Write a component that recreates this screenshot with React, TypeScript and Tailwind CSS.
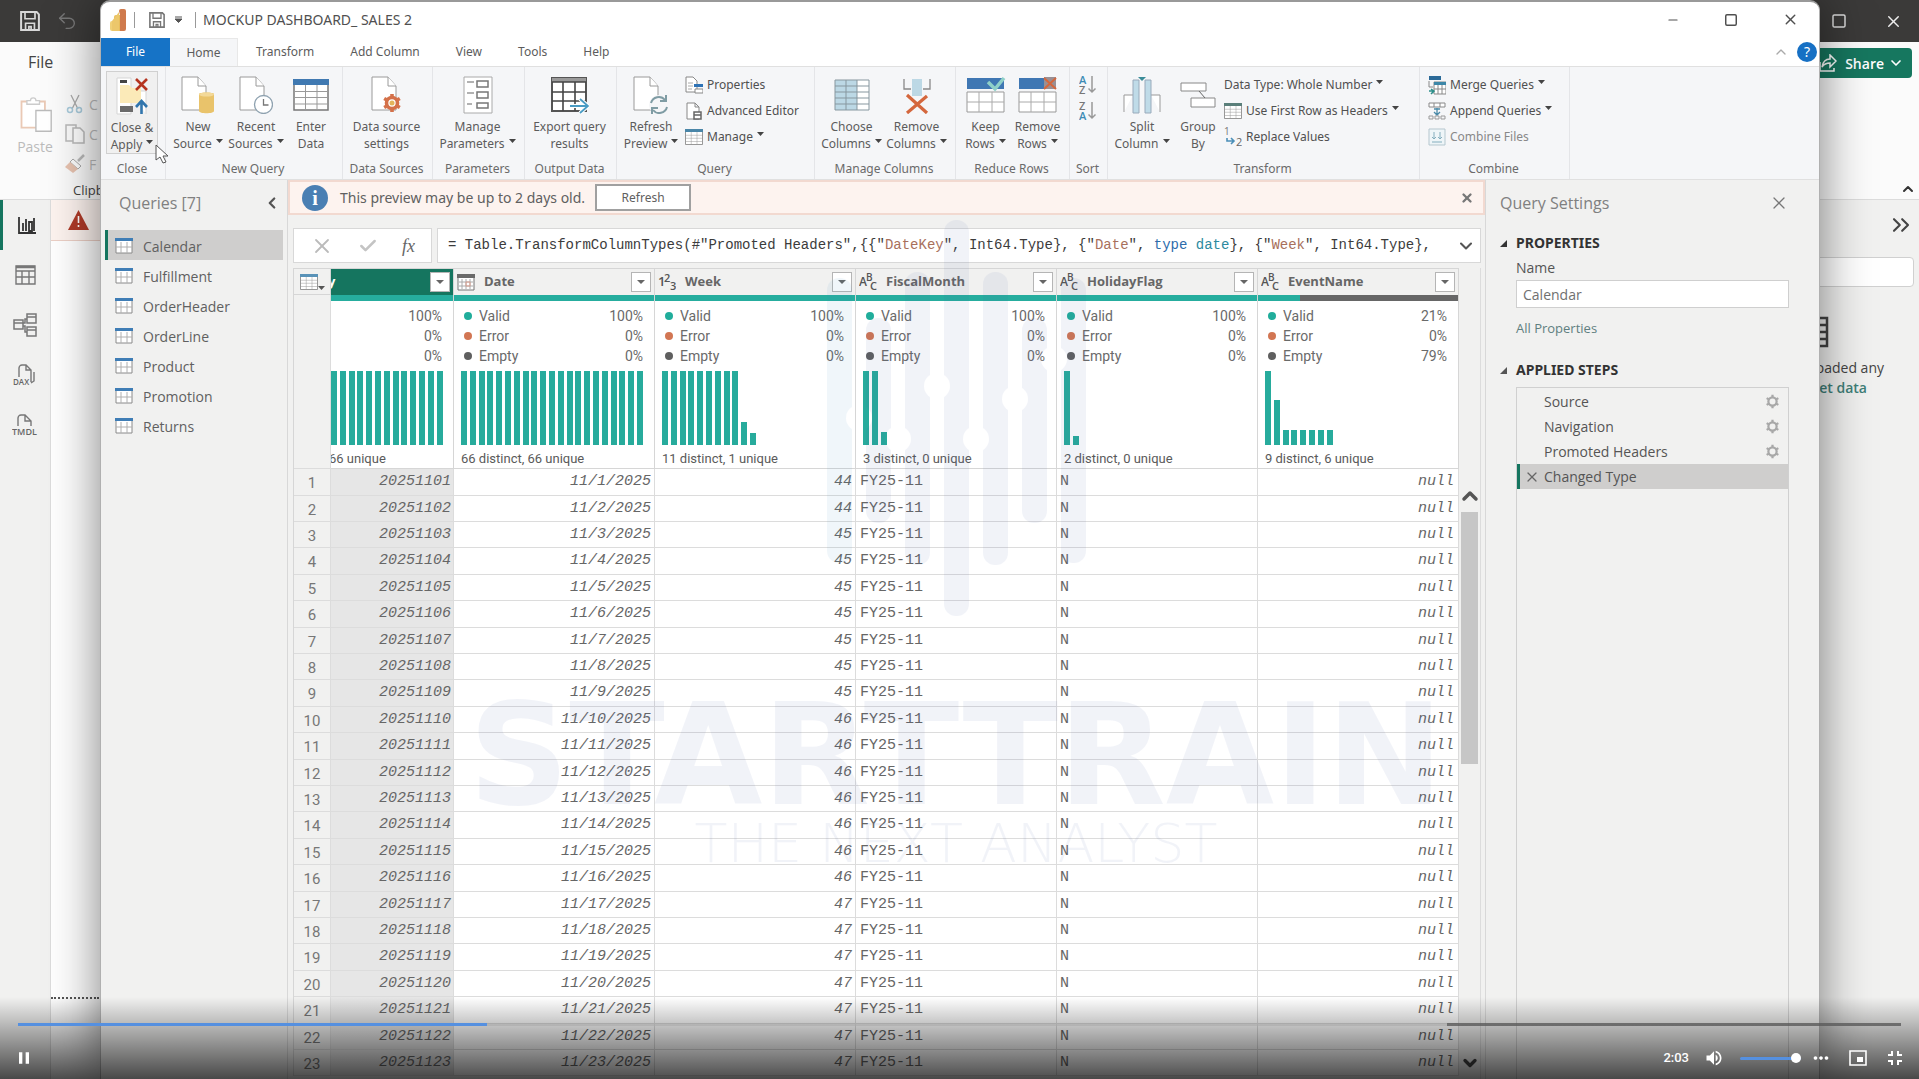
import React from "react";
import { ChevronDown, ChevronLeft, ChevronUp, ChevronsRight, X, Minus, Square, Undo2, Check } from "lucide-react";
import { MdVolumeUp, MdFullscreenExit, MdMoreHoriz, MdPause } from "react-icons/md";

type SvgProps = { children: React.ReactNode; w?: number; h?: number; vb?: string };

const Svg = ({ children, w = 36, h = 38, vb }: SvgProps) => (
  <svg width={w} height={h} viewBox={vb ?? `0 0 ${w} ${h}`} fill="none" aria-hidden="true" className="shrink-0">
    {children}
  </svg>
);

const Caret = () => (
  <svg width="7" height="4" viewBox="0 0 7 4" className="ml-1 inline-block shrink-0 -translate-y-1" aria-hidden="true">
    <path d="M0 0h7L3.500 4z" fill="#444" />
  </svg>
);

/* ---------- icons ---------- */

const PbiLogo = () => (
  <Svg w={16} h={22}>
    <path d="M0 14a2 2 0 0 1 2-2h4v10H2a2 2 0 0 1-2-2z" fill="#f0d078" />
    <path d="M4 8a2 2 0 0 1 2-2h4v16H4z" fill="#e8bd5c" />
    <path d="M9 2a2 2 0 0 1 2-2h3a2 2 0 0 1 2 2v18a2 2 0 0 1-2 2H10V6z" fill="#cf7a4c" />
    <path d="M2 12L9 3v19H2z" fill="#ecc76b" />
  </Svg>
);

const SaveIcon = ({ color, size }: { color: string; size: number }) => (
  <Svg w={size} h={size} vb="0 0 18 18">
    <path d="M1 1h14l2 2v14H1z" stroke={color} strokeWidth="1.8" />
    <path d="M4.500 1v6h9V1M5 17v-6h8v6M8 17v-3h2v3" stroke={color} strokeWidth="1.500" />
  </Svg>
);

const CloseApplyIcon = () => (
  <Svg w={32} h={38}>
    <path d="M1 1h14v36H1zM15 14h15v23" stroke="#d5d5d5" fill="#fff" />
    <path d="M4 8h9l3 3h9v15H4z" fill="#fbeab8" />
    <path d="M4 3h7v3H4z" fill="#444" />
    <path d="M4 29h13v6H4z" fill="#6b6b6b" />
    <path d="M20 2l11 11M31 2L20 13" stroke="#b5341f" strokeWidth="2.600" />
    <path d="M25.500 37V25M20 30l5.500-6 5.500 6" stroke="#3276ad" strokeWidth="2.600" />
  </Svg>
);

const Page = () => (
  <>
    <path d="M1 1h16l8 9v24H1z" fill="#fff" stroke="#9a9a9a" />
    <path d="M17 1v9h8" fill="#fff" stroke="#9a9a9a" />
  </>
);

const NewSourceIcon = () => (
  <Svg w={34} h={38}>
    <Page />
    <path d="M18 18v17c0 3 15 3 15 0V18c0-2-15-2-15 0z" fill="#e9c36b" />
    <ellipse cx="25.500" cy="18.500" rx="7.500" ry="2" fill="#f3d999" />
  </Svg>
);
const RecentIcon = () => (
  <Svg w={34} h={38}>
    <Page />
    <circle cx="24.500" cy="28.500" r="9" fill="#fff" stroke="#8fa2b0" strokeWidth="1.300" />
    <path d="M24.500 23v6h5" stroke="#777" strokeWidth="1.300" />
  </Svg>
);
const GearPath = ({ color, sw = 2.200 }: { color: string; sw?: number }) => (
  <g stroke={color} strokeWidth={sw}>
    <circle cx="10" cy="10" r="5.500" />
    <path d="M10 1v4M10 15v4M2.200 5.500l3.500 2M14.300 12.500l3.500 2M2.200 14.500l3.500-2M14.300 7.500l3.500-2" />
  </g>
);
const DataSettingsIcon = () => (
  <Svg w={32} h={38}>
    <Page />
    <g transform="translate(11 17)">
      <circle cx="10" cy="10" r="7" fill="#fff" />
      <GearPath color="#d4714a" sw={3.600} />
      <circle cx="10" cy="10" r="2.500" fill="#e3b45c" />
    </g>
  </Svg>
);
const GridIcon = ({ head = "#4079b1", w = 36, h = 32 }: { head?: string; w?: number; h?: number }) => (
  <Svg w={w} h={h} vb="0 0 36 32">
    <path d="M1 1h34v30H1z" fill="#fff" stroke="#777" strokeWidth="1.500" />
    <path d="M0 0h36v6H0z" fill={head} />
    <path d="M1 12.500h34M1 18.500h34M1 25h34M12.500 6v25M24 6v25" stroke="#999" />
  </Svg>
);
const ParamsIcon = () => (
  <Svg w={30} h={38}>
    <path d="M1 1h28v36H1z" fill="#fff" stroke="#aaa" />
    <path d="M14 5h11v6H14zM14 16h11v6H14zM14 27h11v5H14z" stroke="#777" strokeWidth="1.500" />
    <path d="M4 6h7M4 17h7M4 28h5" stroke="#999" strokeWidth="1.300" />
  </Svg>
);
const ExportIcon = () => (
  <Svg w={38} h={38}>
    <path d="M1 2h34v33H1z" fill="#fff" stroke="#555" strokeWidth="2" />
    <path d="M1 2h34v4H1z" fill="#999" />
    <path d="M1 16h34M1 25h34M12 6v29M24 6v29M1 6h34" stroke="#444" strokeWidth="1.600" />
    <path d="M19 30h17M29 23l8 7-8 7" stroke="#fff" strokeWidth="4" />
    <path d="M19 30h17M29 23l8 7-8 7" stroke="#4a9cc4" strokeWidth="1.800" />
  </Svg>
);
const RefreshIcon = () => (
  <Svg w={36} h={38}>
    <Page />
    <circle cx="26" cy="29" r="10" fill="#f5f6f8" />
    <path d="M18 27a8 8 0 0 1 14-3M34 31a8 8 0 0 1-14 3M33 19v6h-6M19 38v-6h6" stroke="#7f9ca4" strokeWidth="2" />
  </Svg>
);
const ChooseColsIcon = () => (
  <Svg w={36} h={34}>
    <path d="M1 2h34v30H1z" fill="#fff" />
    <path d="M1 2h22v30H1z" fill="#bcd8e5" />
    <path d="M1 2h34v30H1zM1 8h34M1 14h34M1 20h34M1 26h34M12 2v30M23 2v30" stroke="#87979f" />
  </Svg>
);
const RemoveColsIcon = () => (
  <Svg w={28} h={38}>
    <path d="M1 3v10h7M27 3v10h-7" stroke="#888" strokeWidth="1.300" />
    <path d="M9 3h10v17H9z" fill="#bcd8e5" />
    <path d="M4 19l20 18M24 20L4 37" stroke="#d4673d" strokeWidth="3.200" />
  </Svg>
);
const RowsIcon = ({ remove }: { remove?: boolean }) => (
  <Svg w={40} h={38}>
    <path d="M1 2h37v11H1z" fill="#3f77b3" />
    <path d="M1 16h37v20H1z" fill="#fff" stroke="#999" />
    <path d="M1 26h37M13 16v20M26 16v20" stroke="#aaa" />
    {remove ? (
      <>
        <path d="M26 1h12v12H26z" fill="#9a8f93" />
        <path d="M26 2l12 11M38 2L26 13" stroke="#d4673d" strokeWidth="2" />
      </>
    ) : (
      <path d="M22 6l7 7L38 2" stroke="#8fd0c8" strokeWidth="3.500" />
    )}
  </Svg>
);
const SortIcon = ({ a, b, ca, cb }: { a: string; b: string; ca: string; cb: string }) => (
  <Svg w={18} h={22}>
    <text x="0" y="9" fontSize="11" fontFamily="Open Sans" fontWeight="600" fill={ca}>{a}</text>
    <text x="0" y="19" fontSize="11" fontFamily="Open Sans" fontWeight="600" fill={cb}>{b}</text>
    <path d="M13 1v16M9.500 13.500L13 17l3.500-3.500" stroke="#999" strokeWidth="1.500" />
  </Svg>
);
const SplitIcon = () => (
  <Svg w={38} h={38}>
    <path d="M1 36V19h9M37 36V19h-9" fill="#fff" stroke="#999" />
    <path d="M10 4h6v33h-6zM22 4h6v33h-6z" fill="#bfdbe8" stroke="#9ab" />
    <path d="M15 1h8l-4 4z" fill="#3b8c98" />
  </Svg>
);
const GroupIcon = () => (
  <Svg w={36} h={34}>
    <path d="M1 5h25v8H1zM11 20h24v9H11z" fill="#fff" stroke="#888" />
    <path d="M19 13l6 7" stroke="#666" />
  </Svg>
);
const PropsIcon = () => (
  <Svg w={18} h={18}>
    <path d="M1 1h7l4 4v11H1z" stroke="#888" fill="#fff" />
    <path d="M3 7h5M3 10h5M3 13h4" stroke="#aaa" />
    <path d="M9 8h9v3H9z" fill="#2e72b5" />
    <path d="M10 13h8v4h-8z" stroke="#888" fill="#fff" />
  </Svg>
);
const EditorIcon = () => (
  <Svg w={18} h={18}>
    <path d="M2 1h8l4 4v12H2zM10 1v4h4" stroke="#888" fill="#fff" />
    <path d="M9 10h7v7H9zM9 13h7" stroke="#666" fill="#fff" strokeWidth="1.500" />
  </Svg>
);
const ReplaceIcon = () => (
  <Svg w={18} h={20}>
    <text x="0" y="8" fontSize="10" fontFamily="Open Sans" fill="#777">1</text>
    <text x="12" y="19" fontSize="11" fontFamily="Open Sans" fill="#666">2</text>
    <path d="M3 11v3h6M7 11l3 3-3 3" stroke="#4b8fb8" strokeWidth="1.600" />
  </Svg>
);
const MergeIcon = () => (
  <Svg w={18} h={19}>
    <path d="M1 0h12v4H1z" fill="#2b6a98" />
    <path d="M1 5v6h4" stroke="#888" />
    <path d="M6 6h12v12H6zM6 13h12M10 9v9M14 9v9" stroke="#888" fill="#fff" />
    <path d="M6 6h12v3H6z" fill="#3d87a8" />
    <path d="M1 15h5M3 13l3 2-3 3" stroke="#2d8f8a" strokeWidth="1.500" />
  </Svg>
);
const AppendIcon = () => (
  <Svg w={18} h={18}>
    <path d="M1 1h16v4H1zM6 1v4M12 1v4" stroke="#888" fill="#fff" />
    <path d="M9 6v7M6 10l3 3 3-3M6 7h6" stroke="#4a8aa8" strokeWidth="1.300" />
    <path d="M1 14h4v3H1zM7 14h4v3H7zM13 14h4v3h-4z" stroke="#999" />
  </Svg>
);
const FilesIcon = () => (
  <Svg w={18} h={18}>
    <path d="M1 1h16v16H1z" fill="#eef5f8" stroke="#b5c7cf" />
    <path d="M6 4v7M4 9l2 2 2-2M12 4v7M10 9l2 2 2-2M4 14h10" stroke="#84aebe" />
  </Svg>
);
const TableMini = () => (
  <Svg w={18} h={16}>
    <path d="M1 1h16v14H1z" fill="#fff" stroke="#8a8a8a" />
    <path d="M6 4v11M12 4v11M1 9h16" stroke="#b0b0b0" />
    <path d="M0 0h18v3H0z" fill="#3f7db5" />
  </Svg>
);
const CalIcon = () => (
  <Svg w={18} h={17}>
    <path d="M1 1h16v15H1z" fill="#fff" stroke="#777" />
    <path d="M0 0h18v4H0z" fill="#6a6a6a" />
    <path d="M5 5v10M9 5v10M13 5v10M2 8h14M2 12h14" stroke="#aaa" />
    <path d="M9 8h4v4H9z" stroke="#dca090" />
  </Svg>
);
const NumIcon = () => (
  <Svg w={18} h={20}>
    <g fontFamily="Open Sans" fill="#555" fontWeight="600">
      <text x="0" y="14" fontSize="13">1</text>
      <text x="6" y="10" fontSize="11">2</text>
      <text x="12" y="18" fontSize="11">3</text>
    </g>
  </Svg>
);
const AbcIcon = () => (
  <Svg w={20} h={20}>
    <g fontFamily="Open Sans" fill="#555" fontWeight="600">
      <text x="0" y="14" fontSize="12">A</text>
      <text x="7" y="9" fontSize="10">B</text>
      <text x="11" y="18" fontSize="11">C</text>
    </g>
  </Svg>
);

/* ---------- ribbon ---------- */

type BigProps = { icon: React.ReactNode; lines: [string, string]; caret?: boolean; cls: string };

const Big = ({ icon, lines, caret, cls }: BigProps) => (
  <button type="button" className={`flex h-[83px] shrink-0 flex-col items-center whitespace-nowrap text-[12px] leading-[17px] text-[#5c5c5c] ${cls}`}>
    <span className="flex h-[47px] items-center justify-center">{icon}</span>
    <span>{lines[0]}</span>
    <span>
      {lines[1]}
      {caret && <Caret />}
    </span>
  </button>
);

const Small = ({ icon, text, caret, dim }: { icon?: React.ReactNode; text: string; caret?: boolean; dim?: boolean }) => (
  <button type="button" className={`flex h-[26px] items-center gap-1 whitespace-nowrap text-[12px] ${dim ? "text-[#888]" : "text-[#505050]"}`}>
    {icon}
    <span>
      {text}
      {caret && <Caret />}
    </span>
  </button>
);

const Group = ({ label, cls, children }: { label: string; cls: string; children: React.ReactNode }) => (
  <div className={`flex shrink-0 flex-col border-r border-[#e4e5e8] pt-1 pr-[2px] ${cls}`}>
    <div className="flex h-[87px] justify-center">{children}</div>
    <div className="text-center text-[12px] leading-[21px] text-[#6a6a6a]">{label}</div>
  </div>
);

const Ribbon = () => (
  <div className="flex h-[114px] shrink-0 overflow-hidden border-y border-[#e0e0e0] bg-[#f5f6f8]">
    <Group label="Close" cls="w-[65px]">
      <Big cls="w-[52px] border border-[#d0d0d0] bg-[#f0f0f0]" icon={<CloseApplyIcon />} lines={["Close &", "Apply"]} caret />
    </Group>
    <Group label="New Query" cls="w-[177px]">
      <Big cls="w-[58px]" icon={<NewSourceIcon />} lines={["New", "Source"]} caret />
      <Big cls="w-[58px]" icon={<RecentIcon />} lines={["Recent", "Sources"]} caret />
      <Big cls="w-[52px]" icon={<GridIcon />} lines={["Enter", "Data"]} />
    </Group>
    <Group label="Data Sources" cls="w-[90px]">
      <Big cls="w-[80px]" icon={<DataSettingsIcon />} lines={["Data source", "settings"]} />
    </Group>
    <Group label="Parameters" cls="w-[92px]">
      <Big cls="w-[80px]" icon={<ParamsIcon />} lines={["Manage", "Parameters"]} caret />
    </Group>
    <Group label="Output Data" cls="w-[92px]">
      <Big cls="w-[80px]" icon={<ExportIcon />} lines={["Export query", "results"]} />
    </Group>
    <Group label="Query" cls="w-[198px]">
      <Big cls="w-[68px]" icon={<RefreshIcon />} lines={["Refresh", "Preview"]} caret />
      <div className="flex-1 pt-px">
        <Small icon={<PropsIcon />} text="Properties" />
        <Small icon={<EditorIcon />} text="Advanced Editor" />
        <Small icon={<GridIcon w={18} h={16} head="#4a86a8" />} text="Manage" caret />
      </div>
    </Group>
    <Group label="Manage Columns" cls="w-[141px]">
      <Big cls="w-[65px]" icon={<ChooseColsIcon />} lines={["Choose", "Columns"]} caret />
      <Big cls="w-[65px]" icon={<RemoveColsIcon />} lines={["Remove", "Columns"]} caret />
    </Group>
    <Group label="Reduce Rows" cls="w-[114px]">
      <Big cls="w-[52px]" icon={<RowsIcon />} lines={["Keep", "Rows"]} caret />
      <Big cls="w-[52px]" icon={<RowsIcon remove />} lines={["Remove", "Rows"]} caret />
    </Group>
    <Group label="Sort" cls="w-[38px]">
      <div className="flex flex-col gap-1 pt-1">
        <button type="button" aria-label="Sort ascending"><SortIcon a="A" b="Z" ca="#3d8bb5" cb="#777" /></button>
        <button type="button" aria-label="Sort descending"><SortIcon a="Z" b="A" ca="#777" cb="#3d8bb5" /></button>
      </div>
    </Group>
    <Group label="Transform" cls="w-[312px]">
      <Big cls="w-[68px]" icon={<SplitIcon />} lines={["Split", "Column"]} caret />
      <Big cls="w-[44px]" icon={<GroupIcon />} lines={["Group", "By"]} />
      <div className="flex-1 pt-px pl-1">
        <Small text="Data Type: Whole Number" caret />
        <Small icon={<GridIcon w={18} h={16} head="#5a7f7a" />} text="Use First Row as Headers" caret />
        <Small icon={<ReplaceIcon />} text="Replace Values" />
      </div>
    </Group>
    <Group label="Combine" cls="w-[150px]">
      <div className="flex-1 pt-px pl-2">
        <Small icon={<MergeIcon />} text="Merge Queries" caret />
        <Small icon={<AppendIcon />} text="Append Queries" caret />
        <Small icon={<FilesIcon />} text="Combine Files" dim />
      </div>
    </Group>
  </div>
);

/* ---------- data grid ---------- */

const FULL = 74;
type Col = {
  name: string;
  type: "num" | "date" | "text";
  valid: number;
  bars: number[];
  distinct: string;
  clipped?: boolean;
};

const columns: Col[] = [
  { name: "y", type: "num", valid: 100, bars: Array(13).fill(FULL), distinct: "66 unique", clipped: true },
  { name: "Date", type: "date", valid: 100, bars: Array(21).fill(FULL), distinct: "66 distinct, 66 unique" },
  { name: "Week", type: "num", valid: 100, bars: [...Array(9).fill(FULL), 23, 12], distinct: "11 distinct, 1 unique" },
  { name: "FiscalMonth", type: "text", valid: 100, bars: [FULL, FULL, 13], distinct: "3 distinct, 0 unique" },
  { name: "HolidayFlag", type: "text", valid: 100, bars: [FULL, 9], distinct: "2 distinct, 0 unique" },
  { name: "EventName", type: "text", valid: 21, bars: [FULL, 45, 15, 15, 15, 15, 15, 15], distinct: "9 distinct, 6 unique" },
];

const rows = Array.from({ length: 23 }, (_, i) => {
  const day = i + 1;
  return {
    n: day,
    key: `202511${String(day).padStart(2, "0")}`,
    date: `11/${day}/2025`,
    week: day <= 2 ? 44 : day <= 9 ? 45 : day <= 16 ? 46 : 47,
  };
});

const HeaderCell = ({ c }: { c: Col }) => (
  <th
    scope="col"
    className={`h-[27px] overflow-hidden border-t border-r border-[#d6d6d6] p-0 ${c.clipped ? "bg-[#15755f]" : "bg-[#f1f1f0]"}`}
  >
    <div className={`flex items-center pr-[3px] ${c.clipped ? "-ml-[3px]" : "pl-[3px]"}`}>
      {!c.clipped && <span className="w-[27px]">{c.type === "date" ? <CalIcon /> : c.type === "num" ? <NumIcon /> : <AbcIcon />}</span>}
      <span className={`flex-1 text-left font-['Open_Sans',sans-serif] text-[13px] font-bold ${c.clipped ? "text-white" : "text-[#666]"}`}>{c.name}</span>
      <button type="button" aria-label={`Filter ${c.name}`} className="flex h-5 w-5 items-center justify-center border border-[#b5b5b5] bg-white">
        <svg width="8" height="4" viewBox="0 0 8 4"><path d="M0 0h8L4 4z" fill="#666" /></svg>
      </button>
    </div>
  </th>
);

const Stat = ({ color, label, value, clipped }: { color: string; label: string; value: string; clipped?: boolean }) => (
  <div className="flex h-5 items-center pr-[11px] pl-[10px]">
    {!clipped && (
      <>
        <span className={`mr-[7px] h-2 w-2 rounded-full ${color}`} />
        <span>{label}</span>
      </>
    )}
    <span className="ml-auto">{value}</span>
  </div>
);

const ProfileCell = ({ c }: { c: Col }) => (
  <td className="h-[173px] overflow-hidden border-r border-b border-[#d6d6d6] bg-white p-0 align-top">
    <div className="h-[6px] bg-[#666]">
      <div className="h-full bg-[#26ad9e]" style={{ width: `${c.valid}%` }} />
    </div>
    <div className="pt-[5px] text-[14px] text-[#6a6a6a]">
      <Stat color="bg-[#20ad9b]" label="Valid" value={`${c.valid}%`} clipped={c.clipped} />
      <Stat color="bg-[#d27653]" label="Error" value="0%" clipped={c.clipped} />
      <Stat color="bg-[#5f5f5f]" label="Empty" value={`${100 - c.valid}%`} clipped={c.clipped} />
    </div>
    <svg
      width={c.bars.length * 9}
      height="74"
      viewBox={`0 0 ${c.bars.length * 9} 74`}
      className={`mt-[5px] block ${c.clipped ? "" : "ml-[7px]"}`}
      role="img"
      aria-label={`${c.name} distribution`}
    >
      {c.bars.map((h, i) => (
        <rect key={i} x={Math.round(i * 8.8)} y={74 - h} width="6" height={h} fill="#27ab9c" />
      ))}
    </svg>
    <div className={`mt-1 text-[13px] leading-[19px] whitespace-nowrap text-[#5a5a5a] ${c.clipped ? "-ml-[2px]" : "pl-[7px]"}`}>{c.distinct}</div>
  </td>
);

const cell = "border-r border-b border-[#dcdcdc] p-0 overflow-hidden whitespace-nowrap";

const Grid = () => (
  <table className="w-full table-fixed border-separate border-spacing-0 self-start border-l border-[#d6d6d6]">
    <colgroup>
      <col className="w-[37px]" />
      <col className="w-[123px]" />
      <col />
      <col />
      <col />
      <col />
      <col />
    </colgroup>
    <thead>
      <tr>
        <th className="border-t border-r border-b border-[#d6d6d6] bg-[#f1f1f0] p-0">
          <button type="button" aria-label="Table options" className="flex items-end pl-[6px]">
            <GridIcon w={18} h={16} head="#5a93b8" />
            <svg width="7" height="4" viewBox="0 0 7 4"><path d="M0 0h7L3.500 4z" fill="#555" /></svg>
          </button>
        </th>
        {columns.map((c) => <HeaderCell key={c.name} c={c} />)}
      </tr>
    </thead>
    <tbody className="font-['Liberation_Mono',monospace] text-[15px] text-[#666]">
      <tr className="font-[Roboto,sans-serif]">
        <td className={`${cell} bg-[#f1f1f0]`} />
        {columns.map((c) => <ProfileCell key={c.name} c={c} />)}
      </tr>
      {rows.map((r) => (
        <tr key={r.n} className="h-[26px] leading-5 nth-[5n]:h-[27px] nth-[5n+2]:h-[27px]">
          <th scope="row" className={`${cell} bg-[#f1f1f0] pt-[2px] text-center font-[Roboto,sans-serif] font-normal text-[#777]`}>{r.n}</th>
          <td className={`${cell} bg-[#e6e6e6] pr-[2px] text-right italic`}>{r.key}</td>
          <td className={`${cell} bg-white pr-[3px] text-right italic`}>{r.date}</td>
          <td className={`${cell} bg-white pr-[3px] text-right italic`}>{r.week}</td>
          <td className={`${cell} bg-white pl-1`}>FY25-11</td>
          <td className={`${cell} bg-white pl-[3px]`}>N</td>
          <td className={`${cell} bg-white pr-1 text-right italic`}>null</td>
        </tr>
      ))}
    </tbody>
  </table>
);

/* ---------- editor window ---------- */

const queries = ["Calendar", "Fulfillment", "OrderHeader", "OrderLine", "Product", "Promotion", "Returns"];
const steps = ["Source", "Navigation", "Promoted Headers", "Changed Type"];
const tabs = ["Transform", "Add Column", "View", "Tools", "Help"];

const TitleBar = () => (
  <div className="flex h-9 shrink-0 items-center pb-px pl-[9px] text-[#505050]">
    <PbiLogo />
    <span className="ml-2 h-4 w-px bg-[#999]" />
    <button type="button" aria-label="Save" className="ml-[14px]"><SaveIcon color="#777" size={16} /></button>
    <button type="button" aria-label="Customize toolbar" className="ml-[10px]">
      <Svg w={7} h={7}><path d="M0 1h7M0 3h7L3.500 6.500z" stroke="#555" strokeWidth="1" fill="#555" /></Svg>
    </button>
    <span className="ml-[13px] h-4 w-px bg-[#999]" />
    <span className="ml-[7px] text-[14px]">MOCKUP DASHBOARD_ SALES 2</span>
    <div className="ml-auto flex items-center gap-[44px] pr-5">
      <button type="button" aria-label="Minimize"><Minus size={14} strokeWidth={1.800} /></button>
      <button type="button" aria-label="Maximize"><Square size={14} strokeWidth={2.500} /></button>
      <button type="button" aria-label="Close"><X size={17} strokeWidth={2} /></button>
    </div>
  </div>
);

const TabBar = () => (
  <div className="flex h-[28px] shrink-0 items-stretch text-[12px] text-[#5c5c5c]">
    <button type="button" className="w-[69px] bg-[#1673c6] text-white">File</button>
    <button type="button" className="w-[68px] border-t border-r border-[#e8e8e8] bg-[#f5f6f8]">Home</button>
    {tabs.map((t) => (
      <button key={t} type="button" className="px-[18px]">{t}</button>
    ))}
    <div className="ml-auto flex items-center gap-2 pr-[2px]">
      <button type="button" aria-label="Collapse ribbon"><ChevronUp size={16} color="#aaa" /></button>
      <button type="button" aria-label="Help" className="h-5 w-5 rounded-full bg-[#1670c4] text-[14px] leading-5 text-white">?</button>
    </div>
  </div>
);

const QueriesPane = () => (
  <nav className="w-[187px] shrink-0 border-r border-[#d8d8d8] font-['Open_Sans',sans-serif]">
    <div className="flex h-[50px] items-center justify-between pt-0 pr-[6px] pb-1 pl-[18px]">
      <h2 className="text-[16px] text-[#808080]">Queries [7]</h2>
      <button type="button" aria-label="Collapse queries"><ChevronLeft size={18} strokeWidth={3} color="#555" /></button>
    </div>
    <ul className="pr-1 pl-1">
      {queries.map((q, i) => (
        <li key={q}>
          <button
            type="button"
            className={`flex h-[30px] w-full items-center gap-[10px] border-l-[3px] pt-[2px] pl-[7px] text-[14px] text-[#606060] ${i === 0 ? "border-[#15755f] bg-[#cfcecd]" : "border-transparent"}`}
          >
            <TableMini />
            <span>{q}</span>
          </button>
        </li>
      ))}
    </ul>
  </nav>
);

const FormulaBar = () => (
  <div className="mr-1 ml-[5px] flex h-[35px] shrink-0 gap-[5px]">
    <div className="flex w-[139px] shrink-0 items-center justify-around border border-[#d8d8d8] bg-white px-1">
      <button type="button" aria-label="Cancel"><X size={24} strokeWidth={1.800} color="#bbb" /></button>
      <button type="button" aria-label="Commit"><Check size={20} strokeWidth={3} color="#c4c4c4" /></button>
      <button type="button" aria-label="Insert step" className="font-['Liberation_Serif',serif] text-[18px] leading-6 text-[#666] italic">fx</button>
    </div>
    <div className="flex min-w-0 flex-1 items-center justify-between border border-[#d8d8d8] bg-white pr-1 pl-[10px]">
      <code className="font-['Liberation_Mono',monospace] text-[14px] whitespace-pre text-[#3c3c3c]">
        {'= Table.TransformColumnTypes(#"Promoted Headers",{{"'}
        <span className="text-[#a8705c]">DateKey</span>
        {'", Int64.Type}, {"'}
        <span className="text-[#a8705c]">Date</span>
        {'", '}
        <span className="text-[#2d6cab]">type</span> <span className="text-[#2d8aa0]">date</span>
        {'}, {"'}
        <span className="text-[#a8705c]">Week</span>
        {'", Int64.Type},'}
      </code>
      <button type="button" aria-label="Expand formula"><ChevronDown size={20} strokeWidth={2.500} color="#555" /></button>
    </div>
  </div>
);

const SettingsPane = () => (
  <aside className="flex w-[334px] shrink-0 flex-col border-l border-[#d8d8d8] pr-[30px] pl-[14px] font-['Open_Sans',sans-serif] text-[#555]">
    <div className="flex h-[46px] shrink-0 items-center justify-between">
      <h2 className="text-[16px] text-[#808080]">Query Settings</h2>
      <button type="button" aria-label="Close settings"><X size={20} strokeWidth={1.500} color="#777" /></button>
    </div>
    <h3 className="mt-[6px] flex items-center text-[14px] leading-[22px] font-bold text-[#333]">
      <Svg w={7} h={7}><path d="M7 0v7H0z" fill="#333" /></Svg>
      <span className="ml-[9px] font-['Noto_Sans',sans-serif]">PROPERTIES</span>
    </h3>
    <label htmlFor="query-name" className="mt-1 pl-4 text-[14px] leading-[20px]">Name</label>
    <input id="query-name" defaultValue="Calendar" className="mt-[2px] ml-4 h-[28px] shrink-0 border border-[#cfcfcf] bg-white px-[6px] text-[14px] text-[#707070]" />
    <a href="#properties" className="mt-[10px] pl-4 text-[13px] leading-[20px] text-[#5f7f80]">All Properties</a>
    <h3 className="mt-[21px] flex items-center text-[14px] leading-[22px] font-bold text-[#333]">
      <Svg w={7} h={7}><path d="M7 0v7H0z" fill="#555" /></Svg>
      <span className="ml-[9px] font-['Noto_Sans',sans-serif]">APPLIED STEPS</span>
    </h3>
    <ul className="mt-[6px] ml-4 flex-1 border border-b-0 border-[#d0d0d0] pt-px">
      {steps.map((s, i) => (
        <li key={s} className={`flex h-[25px] items-center border-l-[3px] pr-2 text-[14px] ${i === 3 ? "border-[#15755f] bg-[#cfcecd]" : "border-transparent"}`}>
          <button type="button" className="flex items-center">
            <span className="flex w-6 items-center pl-1">{i === 3 && <X size={16} strokeWidth={1.800} color="#666" />}</span>
            {s}
          </button>
          {i < 3 && (
            <button type="button" aria-label={`${s} settings`} className="ml-auto">
              <Svg w={15} h={15} vb="0 0 20 20"><GearPath color="#a8a8a8" sw={3} /></Svg>
            </button>
          )}
        </li>
      ))}
    </ul>
  </aside>
);

const EditorWindow = () => (
  <div className="absolute inset-y-0 right-[99px] left-[100px] flex flex-col overflow-hidden rounded-t-[10px] border-x border-t-2 border-[#b0b0b0] border-t-[#999] bg-white shadow-[0_0_50px_rgba(0,0,0,0.5)]">
    <TitleBar />
    <TabBar />
    <Ribbon />
    <div className="flex min-h-0 flex-1 bg-[#f1f1f0]">
      <QueriesPane />
      <main className="flex min-w-0 flex-1 flex-col">
        <div className="mb-[13px] flex h-[35px] shrink-0 items-center border-2 border-[#f2d9d0] bg-[#fdf3ef] pl-3">
          <span className="flex h-[26px] w-[26px] items-center justify-center rounded-full bg-[#4a7fb3] font-['Liberation_Serif',serif] text-[20px] font-bold text-white">i</span>
          <span className="ml-3 text-[14px] text-[#606060]">This preview may be up to 2 days old.</span>
          <button type="button" className="ml-[10px] h-[27px] w-[96px] border-2 border-[#a0a0a0] bg-white text-[12px] text-[#606060]">Refresh</button>
          <button type="button" aria-label="Dismiss" className="mr-[9px] ml-auto"><X size={14} strokeWidth={4} color="#777" /></button>
        </div>
        <FormulaBar />
        <div className="mt-[5px] mr-1 ml-[5px] flex min-h-0 flex-1">
          <div className="min-w-0 flex-1 overflow-hidden"><Grid /></div>
          <div className="flex w-[22px] shrink-0 flex-col items-center border-r border-[#dcdcdc] pt-[216px] pb-[6px]">
            <ChevronUp size={24} strokeWidth={3.500} color="#555" />
            <div className="mt-1 h-[252px] w-[17px] bg-[#c6c6c6]" />
            <ChevronDown size={20} strokeWidth={4} color="#444" className="mt-auto" />
          </div>
        </div>
      </main>
      <SettingsPane />
    </div>
    <svg width="14" height="20" viewBox="0 0 14 20" className="absolute top-[142px] left-[54px]" aria-hidden="true">
      <path d="M1 1v15l4-3 3 6 3-1-3-6h5z" fill="#fff" stroke="#555" />
    </svg>
  </div>
);

/* ---------- window behind ---------- */

const railIcon = "flex h-[50px] items-center justify-center";

const Backdrop = () => (
  <div className="flex h-full flex-col bg-[#f1f1f0] font-['Open_Sans',sans-serif] text-[#444]">
    <div className="flex h-[42px] shrink-0 items-center bg-[#3b3a39] pr-4 pl-5">
      <button type="button" aria-label="Save report"><SaveIcon color="#d8d8d8" size={20} /></button>
      <button type="button" aria-label="Undo" className="ml-4"><Undo2 size={22} strokeWidth={1.500} color="#777" /></button>
      <button type="button" aria-label="Maximize report" className="ml-auto"><Square size={16} strokeWidth={2.200} color="#ddd" /></button>
      <button type="button" aria-label="Close report" className="ml-[37px]"><X size={19} strokeWidth={1.800} color="#eee" /></button>
    </div>
    <div className="flex h-[158px] shrink-0 justify-between border-b border-[#dcdcdc] bg-[#fbfbfb]">
      <div className="w-[100px] overflow-hidden">
        <button type="button" className="mt-[9px] ml-7 block text-[16px] leading-[22px]">File</button>
        <div className="mt-[21px] flex items-start pl-[17px] text-[#bbb]">
          <button type="button" className="flex w-9 flex-col items-center text-[14px] leading-[22px]">
            <Svg w={36} h={42} vb="0 0 40 42">
              <path d="M5 6h26v29H5z" stroke="#eac9b5" strokeWidth="2" fill="#fff" />
              <path d="M11 9V5h4a3 3 0 0 1 6 0h4v4z" stroke="#ccc" fill="#fff" strokeWidth="1.500" />
              <path d="M21 16h17v23H21z" stroke="#bbb" fill="#fff" strokeWidth="1.500" />
            </Svg>
            Paste
          </button>
          <div className="ml-3 flex flex-col gap-[10px]">
            <button type="button" aria-label="Cut">
              <Svg w={20} h={20}><path d="M6 1l7 14M14 1L7 15" stroke="#aaa" strokeWidth="1.300" /><circle cx="5" cy="16" r="2.500" stroke="#a9cbdc" strokeWidth="1.500" /><circle cx="14" cy="16" r="2.500" stroke="#a9cbdc" strokeWidth="1.500" /></Svg>
            </button>
            <button type="button" aria-label="Copy">
              <Svg w={20} h={20}><path d="M1 1h10v16H1z" stroke="#bbb" strokeWidth="1.500" /><path d="M8 4h7l4 4v11H8z" stroke="#bbb" fill="#fff" strokeWidth="1.500" /></Svg>
            </button>
            <button type="button" aria-label="Format painter">
              <Svg w={20} h={20}><path d="M19 1l-6 6" stroke="#bbb" strokeWidth="2.500" /><path d="M8 5l8 7-3 3-8-7z" stroke="#aaa" fill="#fff" /><path d="M5 8l8 7-5 4-8-6z" fill="#e8c3b0" /></Svg>
            </button>
          </div>
          <div className="ml-1 flex flex-col gap-[9px] text-[14px] leading-[21px]"><span>C</span><span>C</span><span>F</span></div>
        </div>
        <div className="mt-[5px] pl-[73px] text-[13px] leading-5">Clipb</div>
      </div>
      <div className="flex flex-col items-end pt-[6px] pr-[7px]">
        <button type="button" className="flex h-[30px] w-[100px] items-center justify-end gap-2 rounded bg-[#16775f] pr-2 text-[14px] font-semibold text-white">
          <Svg w={18} h={18}><path d="M1 8v9h14v-3M3 13c1-6 4-8 8-8V1l6 6-6 6V9c-4 0-6 1-8 4z" stroke="#fff" strokeWidth="1.500" /></Svg>
          Share
          <ChevronDown size={16} strokeWidth={2.500} className="-ml-1" />
        </button>
        <button type="button" aria-label="Collapse" className="mt-auto mb-[2px] -mr-1"><ChevronUp size={16} strokeWidth={3} color="#333" /></button>
      </div>
    </div>
    <div className="flex min-h-0 flex-1">
      <div className="w-[51px] border-r border-[#dcdcdc]">
        <div className={`${railIcon} border-l-[3px] border-[#15755f]`}>
          <Svg w={18} h={18}><path d="M1 1v16h17M5 7v8M8 3v12M11 6v9h3V6zM16 2v13" stroke="#333" strokeWidth="1.800" /></Svg>
        </div>
        <div className={railIcon}>
          <Svg w={21} h={20}><path d="M1 1h19v18H1zM1 6h19M1 12h19M7 6v13M14 6v13" stroke="#777" strokeWidth="1.400" /><path d="M1 2h19" stroke="#777" strokeWidth="2.500" /></Svg>
        </div>
        <div className={railIcon}>
          <Svg w={24} h={24}><path d="M1 7h9v9H1zM1 10h9M14 1h9v9h-9zM14 4h9M14 14h9v9h-9zM14 17h9M10 10h2V6h2M10 13h2v6h2" stroke="#777" strokeWidth="1.500" /></Svg>
        </div>
        <div className={railIcon}>
          <Svg w={24} h={22}>
            <path d="M6 13V4a3 3 0 0 1 3-3h4l5 5v12M13 1v5h5M21 8v9l-3 2" stroke="#777" strokeWidth="1.400" />
            <text x="0" y="21" fontSize="8" fontFamily="Open Sans" fontWeight="600" fill="#666">DAX</text>
          </Svg>
        </div>
        <div className={railIcon}>
          <Svg w={26} h={22}>
            <path d="M6 12V4a3 3 0 0 1 3-3h4l6 6v5M13 1v6h6" stroke="#777" strokeWidth="1.400" />
            <text x="0" y="21" fontSize="9" fontFamily="Open Sans" fontWeight="600" fill="#666">TMDL</text>
          </Svg>
        </div>
      </div>
      <div className="flex min-w-0 flex-1 flex-col bg-white">
        <div className="h-[41px] shrink-0 border-b border-[#ecd0c6] bg-[#fdf3ef] pt-[10px] pl-[17px]">
          <Svg w={21} h={20}><path d="M10.500 0L21 20H0z" fill="#b03a28" /><path d="M10.500 6v7M10.500 15v2" stroke="#fff" strokeWidth="1.600" /></Svg>
        </div>
        <div className="mt-auto mb-[80px] w-[48px] border-t-2 border-dotted border-[#555]" />
      </div>
      <div className="flex w-[120px] flex-col bg-[#f1f1f0] text-[14px] leading-5">
        <div className="flex h-[50px] items-center justify-end pr-1"><ChevronsRight size={28} strokeWidth={1.800} color="#444" /></div>
        <input aria-label="Search" className="mt-[7px] mr-[5px] h-[30px] rounded border border-[#d0d0d0] bg-white" />
        <div className="mt-[29px] pl-[14px]"><Svg w={16} h={32}><path d="M0 2h14v28H0M0 9h14M0 16h14M0 23h14" stroke="#444" strokeWidth="2.500" /></Svg></div>
        <p className="mt-[10px] pr-[35px] text-right">loaded any</p>
        <p className="pr-[52px] text-right font-semibold text-[#3f7f78]">Get data</p>
      </div>
    </div>
  </div>
);

/* ---------- overlays ---------- */

const pillars = [
  { x: 0, top: 58, bottom: 343, fill: "#3f8fc0" },
  { x: 39, top: 98, bottom: 303, fill: "#4a62a8" },
  { x: 78, top: 52, bottom: 345, fill: "#4a62a8" },
  { x: 117, top: 0, bottom: 396, fill: "#4a62a8" },
  { x: 156, top: 52, bottom: 345, fill: "#4a62a8" },
  { x: 195, top: 98, bottom: 303, fill: "#4a62a8" },
  { x: 234, top: 58, bottom: 343, fill: "#4a62a8" },
];
const knobs = [[32, 198], [71, 219], [110, 166], [149, 219], [188, 179], [227, 139]];

const Watermark = () => (
  <div className="pointer-events-none absolute inset-x-0 top-[220px] flex flex-col items-center pr-[7px] text-[#4a62a8]">
    <svg width="259" height="396" viewBox="0 0 259 396" className="opacity-[0.07]" aria-hidden="true">
      <defs>
        <mask id="knobs">
          <path d="M0 0h259v396H0z" fill="#fff" />
          {knobs.map(([x, y]) => <circle key={x} cx={x} cy={y} r="13" fill="#000" />)}
        </mask>
      </defs>
      <g mask="url(#knobs)">
        {pillars.map((p) => <rect key={p.x} x={p.x} y={p.top} width="25" height={p.bottom - p.top} rx="12" fill={p.fill} />)}
      </g>
    </svg>
    <div className="mt-[68px] font-['DejaVu_Sans',sans-serif] text-[140px] leading-[144px] font-bold opacity-[0.07]">STARTTRAIN</div>
    <div className="-mt-[16px] font-['DejaVu_Sans',sans-serif] text-[54px] leading-[64px] font-extralight opacity-[0.07]">THE NEXT ANALYST</div>
  </div>
);

const range = "appearance-none cursor-pointer [&::-webkit-slider-thumb]:appearance-none";

const Player = () => (
  <div className="absolute inset-x-0 bottom-0 flex h-[82px] flex-col bg-linear-to-b from-transparent to-black/70 px-[18px] pt-[26px] text-white">
    <input
      type="range"
      aria-label="Seek"
      defaultValue={25}
      className={`${range} block h-[3px] w-full shrink-0 bg-[linear-gradient(to_right,#5590e0_0_24.900%,rgba(170,170,170,0.6)_24.900%_75.900%,rgba(90,90,90,0.8)_75.900%)] [&::-webkit-slider-thumb]:h-[3px] [&::-webkit-slider-thumb]:w-px`}
    />
    <div className="mt-[20px] flex h-6 items-center">
      <button type="button" aria-label="Pause" className="-ml-[4px]"><MdPause size={20} /></button>
      <span className="ml-auto font-[Roboto,sans-serif] text-[13px] font-medium">2:03</span>
      <button type="button" aria-label="Mute" className="ml-[15px]"><MdVolumeUp size={20} /></button>
      <input
        type="range"
        aria-label="Volume"
        defaultValue={100}
        className={`${range} ml-4 h-[3px] w-[61px] rounded bg-[#5590e0] [&::-webkit-slider-thumb]:h-[10px] [&::-webkit-slider-thumb]:w-[10px] [&::-webkit-slider-thumb]:rounded-full [&::-webkit-slider-thumb]:bg-white`}
      />
      <button type="button" aria-label="More" className="ml-[9px]"><MdMoreHoriz size={22} /></button>
      <button type="button" aria-label="Picture in picture" className="ml-[17px]">
        <Svg w={18} h={16}><path d="M1 1h16v14H1z" stroke="#fff" strokeWidth="1.600" /><path d="M8 7h6v5H8z" fill="#fff" /></Svg>
      </button>
      <button type="button" aria-label="Exit full screen" className="ml-[16px] -mr-[6px]"><MdFullscreenExit size={24} /></button>
    </div>
  </div>
);

export default function App() {
  return (
    <div className="relative h-screen w-full overflow-hidden font-['Noto_Sans',sans-serif]">
      <Backdrop />
      <EditorWindow />
      <Watermark />
      <Player />
    </div>
  );
}
